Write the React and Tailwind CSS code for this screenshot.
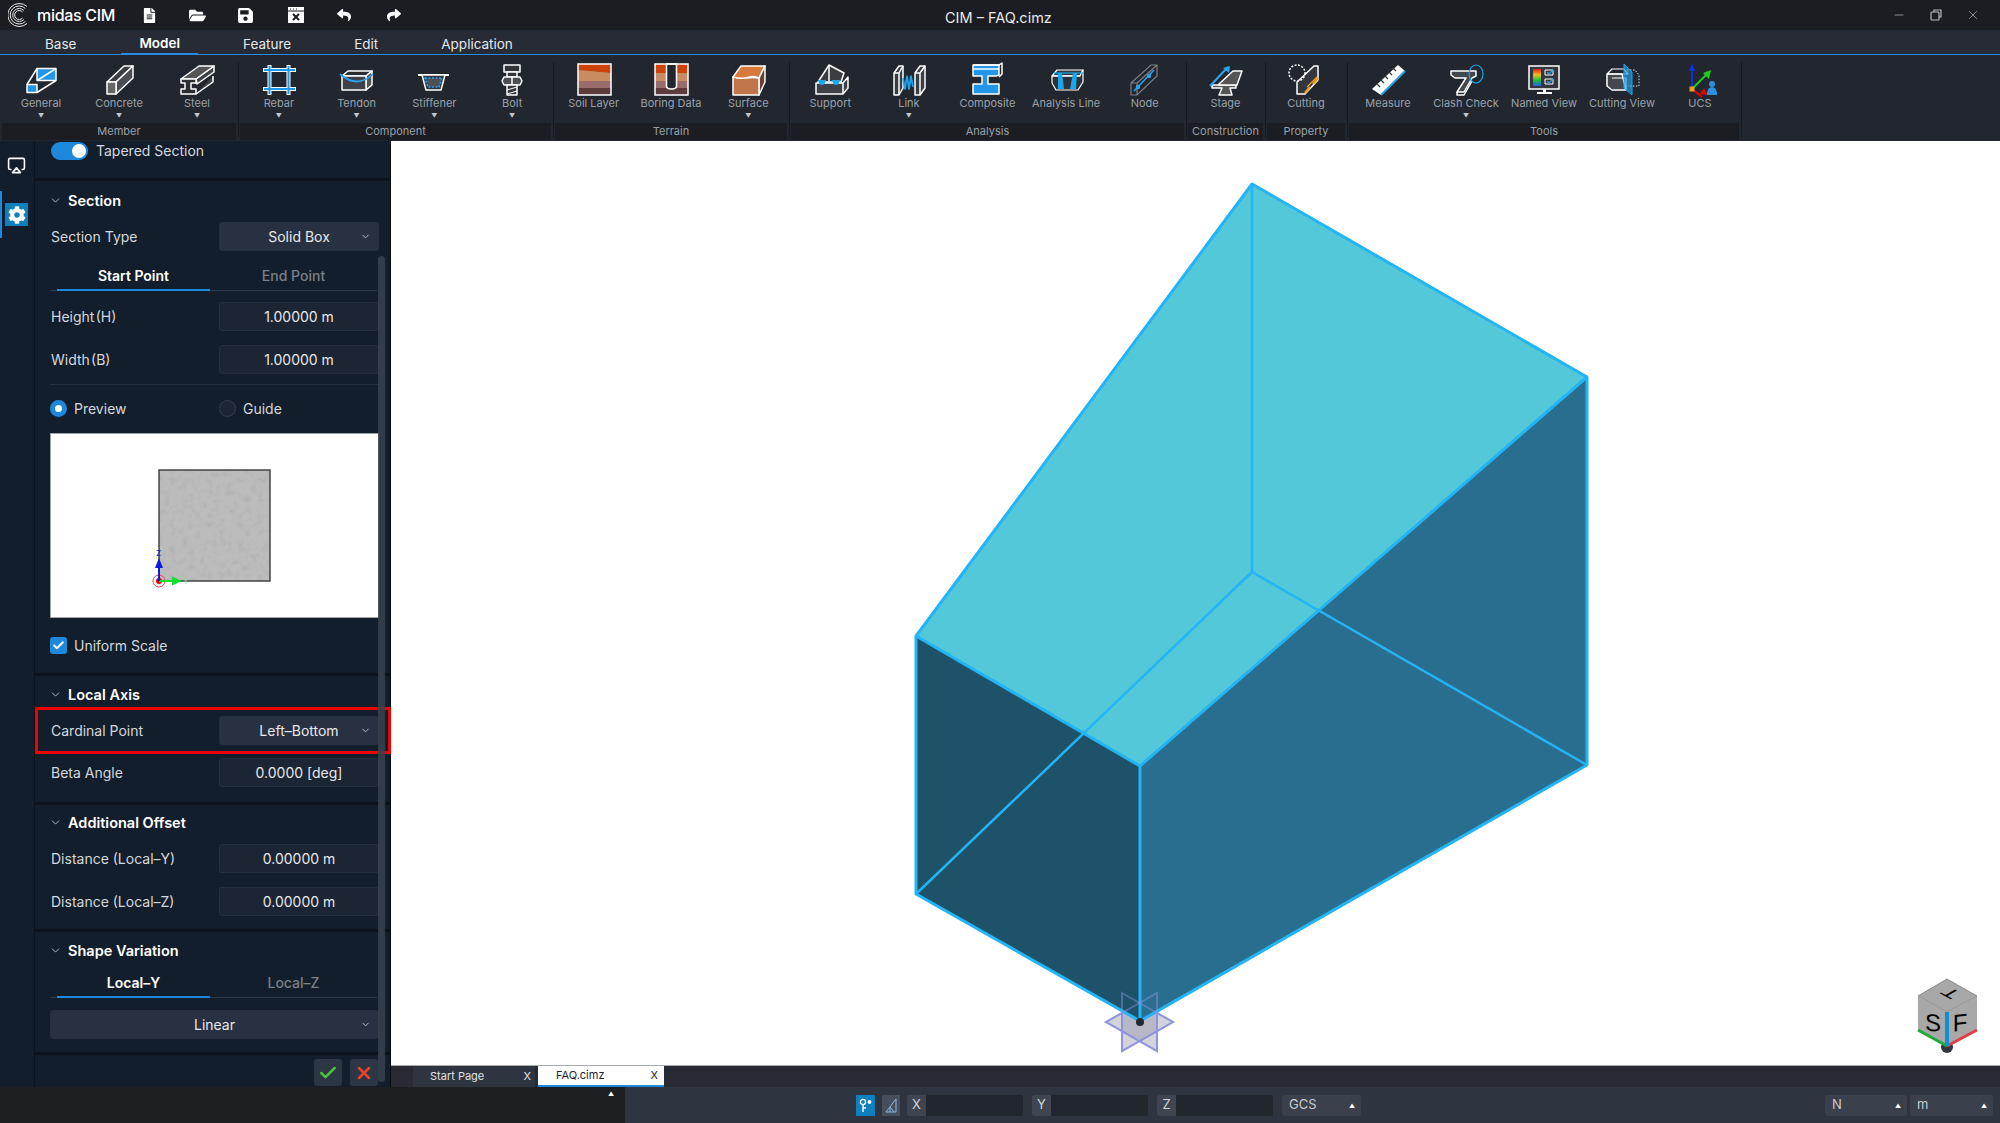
import React from "react";
import { Airplay, Check, ChevronDown, Minus, X } from "lucide-react";
import { FaCog, FaFileAlt, FaFolderOpen, FaReply, FaSave, FaShare } from "react-icons/fa";

// ribbon icons, drawn in a 40x30 box
const W = { fill: "none", stroke: "#fff", strokeWidth: 1.5, strokeLinejoin: "round" };
const ribbonIcons = {
  General: (
    <g {...W}>
      <rect x="16" y="3.5" width="19" height="12" fill="#2196e8" />
      <path d="M16 15.5 35 3.5" />
      <path d="M6 19.5 16 3.5M16 27.5 35 15.5" />
      <rect x="6" y="19.5" width="10" height="8" fill="#2196e8" />
    </g>
  ),
  Concrete: (
    <g {...W}>
      <path d="M8 17 25 1h9L17 17z" fill="#3a3d43" />
      <path d="M17 17 34 1v12L17 29z" fill="#4a4d52" />
      <rect x="8" y="17" width="9" height="12" fill="#666" />
    </g>
  ),
  Steel: (
    <g {...W}>
      <path d="M19 14 37 1v6l-17 12zM19 29l17-12v-6" fill="#3e4147" />
      <path d="M4 14 22 1h15L19 14z" fill="#555" />
      <path d="M4 14h15v4h-5v6h5v5H4v-5h4v-6H4z" fill="#2a2d33" />
    </g>
  ),
  Rebar: (
    <g fill="none">
      <path d="M10.5 0v30M29.5 0v30M4 5h33M4 24h33" stroke="#fff" strokeWidth="4" />
      <path d="M10.5 1v28M29.5 1v28M5 5h31M5 24h31" stroke="#2196e8" strokeWidth="2" />
    </g>
  ),
  Tendon: (
    <g {...W}>
      <path d="M5 11 11 6h24l-6 5z" fill="#2a2d33" />
      <path d="M29 11 35 6v14l-6 5z" fill="#555" />
      <rect x="5" y="11" width="24" height="14" fill="#3e4147" />
      <path d="M3 9q17 15 33 0" stroke="#2aa4ee" strokeWidth="1.7" />
    </g>
  ),
  Stiffener: (
    <g {...W}>
      <path d="M4 10h31" strokeWidth="2" />
      <path d="M8 10h23l-4 15H12z" fill="#2f3238" />
      <path d="M11 13h17l-3 9H14z" fill="#4d5056" stroke="#2aa4ee" strokeDasharray="2 1.5" />
    </g>
  ),
  Bolt: (
    <g {...W}>
      <rect x="12" y="0" width="16" height="7" fill="#33363c" />
      <rect x="15" y="7" width="10" height="5" fill="#33363c" />
      <path d="M12 12h16l2 4-2 4H12l-2-4z" fill="#4b4e54" />
      <path d="M20 12v8" />
      <rect x="15" y="20" width="10" height="10" fill="#33363c" />
      <path d="m15 25 10-3M15 29l10-3" strokeWidth="1" />
    </g>
  ),
  "Soil Layer": (
    <g>
      <rect x="4" y="-1" width="33" height="31" fill="#9a6d6c" />
      <path d="M4-1h33v9l-33-3z" fill="#cc4308" />
      <path d="M4 5l33 3v8H4z" fill="#c98b60" />
      <rect x="4" y="23" width="33" height="7" fill="#5d3c3c" />
      <rect x="4" y="-1" width="33" height="31" fill="none" stroke="#fff" strokeWidth="1.5" />
    </g>
  ),
  "Boring Data": (
    <g>
      <rect x="4" y="-1" width="33" height="31" fill="#9a6d6c" />
      <path d="M4-1h33v9H4z" fill="#cc4308" />
      <path d="M4 8h33v8H4z" fill="#c98b60" />
      <rect x="4" y="23" width="33" height="7" fill="#5d3c3c" />
      <path d="M15.5-1v22q0 3 5 3t5-3V-1z" fill="#22262e" stroke="#fff" strokeWidth="1.5" />
      <rect x="4" y="-1" width="33" height="31" fill="none" stroke="#fff" strokeWidth="1.5" />
    </g>
  ),
  Surface: (
    <g {...W}>
      <path d="M5 12 13 1h24l-6 12q-6-3-13 0t-13-1z" fill="#d97a3c" />
      <path d="M31 13 37 1v16l-6 13z" fill="#6b4030" />
      <path d="M5 12q6 2 13 1t13 0v17H5z" fill="#c0764a" />
    </g>
  ),
  Support: (
    <g {...W}>
      <path d="M8 17 19 0l15 8-3 9z" fill="#3a3d43" />
      <path d="M19 0v16" />
      <path d="M6 18h27v11H6zM33 18l5-6v11l-5 6" fill="#3e4147" />
      <path d="M8 15h8q-1 5-4 5t-4-5zM22 15h8q-1 5-4 5t-4-5z" fill="#19a6ee" stroke="none" />
    </g>
  ),
  Link: (
    <g {...W}>
      <path d="M5 8 10 1h4v22l-4 7H5z" fill="#3a3d43" />
      <path d="M10 8v22M5 8h5l4-7" />
      <path d="M26 8 31 1h5v22l-5 7h-5z" fill="#3a3d43" />
      <path d="M31 8v22M26 8h5l5-7" />
      <path d="m14 13 2 11 2-13 2 13 2-13 2 11" stroke="#19a6ee" strokeWidth="1.7" />
    </g>
  ),
  Composite: (
    <g {...W}>
      <path d="M6 0h26v10l-3 1H21v8h11v10H6V19h9v-8H6z" fill="#2196e8" />
      <path d="M6 0h26l3-2v11l-3 3" />
      <path d="M6 4h26" />
    </g>
  ),
  "Analysis Line": (
    <g {...W} strokeWidth="1.2">
      <path d="M6 11 11 5h26l-3 6z" fill="#33363c" />
      <path d="M34 11l3-6v12l-5 8H10l-4-7V11z" fill="#2e3137" />
      <path d="M6 11h28" />
      <path d="M12 8h4l2 16h-6zM27 8h4l-1 16h-6z" fill="#19a6ee" stroke="none" />
      <path d="M8 8h30" stroke="#19a6ee" />
    </g>
  ),
  Node: (
    <g fill="none" stroke="#7b7f86" strokeWidth="1.2">
      <path d="M6 18 26 0h6v11L12 30H6zM12 18 32 0M12 18H6M12 18v12" />
      <path d="M9 26 29 5" stroke="#2aa4ee" strokeWidth="1.6" />
      <circle cx="13" cy="22" r="2.2" fill="#2aa4ee" stroke="none" />
      <circle cx="24" cy="11" r="2.2" fill="#2aa4ee" stroke="none" />
    </g>
  ),
  Stage: (
    <g {...W}>
      <path d="M6 20h24v3h-6l2 7H13l3-7H6z" fill="#555" />
      <path d="m13 19 14-13h9l-5 14H13z" fill="#555" />
      <path d="M4 21 22 2" stroke="#2aa4ee" strokeWidth="2.2" />
      <path d="m17 3 7-2-1 7z" fill="#2aa4ee" stroke="none" />
    </g>
  ),
  Cutting: (
    <g {...W}>
      <path d="M11 17v12h8l13-14V1h-4z" fill="#33363c" />
      <circle cx="11" cy="8" r="8" stroke="#fff" strokeDasharray="2 1.5" />
      <path d="m19 28 5-6m3-3 5-6" stroke="#f0a020" strokeWidth="2.4" />
      <path d="M21 22 31 12" stroke="#f0a020" strokeWidth="1.2" />
    </g>
  ),
  Measure: (
    <g>
      <path d="M4 24 30 0l7 6-24 24z" fill="#fff" />
      <path d="m13 30 24-24" stroke="#2aa4ee" strokeWidth="2" />
      <path d="m9 19 3 3m1-7 3 3m1-7 3 3m1-7 3 3m1-7 3 3" stroke="#33363c" strokeWidth="1.2" />
    </g>
  ),
  "Clash Check": (
    <g {...W}>
      <path d="M5 6h25v5l-4 2-8 14H11l9-14H9l-4-3z" fill="#44474d" />
      <path d="M11 27v3h7l8-14" />
      <ellipse cx="30" cy="9" rx="7" ry="9" stroke="#19a6ee" strokeWidth="1.2" />
    </g>
  ),
  "Named View": (
    <g>
      <rect x="5" y="1" width="30" height="23" fill="#33363c" stroke="#fff" strokeWidth="1.5" />
      <rect x="9" y="4" width="8" height="17" fill="url(#rainbow)" />
      <path d="M21 5h8v5h-8zM21 14h8v5h-8z" fill="none" stroke="#fff" strokeWidth="1" />
      <path d="m23 7 2 2 4-4m-6 11 2 2 4-4" fill="none" stroke="#2aa4ee" strokeWidth="1.2" />
      <path d="M19 24h3v3h-3zM13 27h15v2H13z" fill="#fff" />
    </g>
  ),
  "Cutting View": (
    <g fill="none" strokeLinejoin="round">
      <path d="M5 9h15l4 16H10l-5-4z" fill="#44474d" stroke="#fff" strokeWidth="1.5" />
      <path d="M5 9 10 4h12l4 5H5M10 13h14v12" stroke="#fff" strokeWidth="1.2" />
      <path d="M25 5h8l4 5v11H26" stroke="#ddd" strokeWidth="1" strokeDasharray="1.5 1.5" />
      <path d="M22-1 30 7v23l-8-7z" fill="#2aa4ee" fillOpacity="0.65" stroke="#19a6ee" strokeWidth="1" />
    </g>
  ),
  UCS: (
    <g fill="none" strokeWidth="2">
      <path d="M12 24V4" stroke="#1030e0" />
      <path d="m12-2 3 8H9z" fill="#1030e0" />
      <path d="M12 24 26 10" stroke="#18d018" />
      <path d="m31 5-2 9-6-6z" fill="#18d018" />
      <path d="m12 24 12 4" stroke="#e00000" strokeWidth="2" transform="rotate(20 12 24)" />
      <path d="m28 30-8-1 4-6z" fill="#e00000" />
      <rect x="9.5" y="21.5" width="5" height="5" fill="#f0a020" />
      <circle cx="32" cy="19" r="3" fill="#2a90e0" />
      <path d="M27 30q0-8 5-8t5 8z" fill="#2a90e0" />
    </g>
  ),
};

const ribbonGroups = [
  { name: "Member", width: "w-[234px]", items: ["General", "Concrete", "Steel"], arrows: ["General", "Concrete", "Steel"] },
  { name: "Component", width: "w-[311px]", items: ["Rebar", "Tendon", "Stiffener", "Bolt"], arrows: ["Rebar", "Tendon", "Stiffener", "Bolt"] },
  { name: "Terrain", width: "w-[232px]", items: ["Soil Layer", "Boring Data", "Surface"], arrows: ["Surface"] },
  { name: "Analysis", width: "w-[393px]", items: ["Support", "Link", "Composite", "Analysis Line", "Node"], arrows: ["Link"] },
  { name: "Construction", width: "w-[75px]", items: ["Stage"], arrows: [] },
  { name: "Property", width: "w-[78px]", items: ["Cutting"], arrows: [] },
  { name: "Tools", width: "w-[390px]", items: ["Measure", "Clash Check", "Named View", "Cutting View", "UCS"], arrows: ["Clash Check"] },
];

function RibbonGroup({ group }) {
  return (
    <div className={`${group.width} flex flex-col`}>
      <div className="flex h-[68px]">
        {group.items.map((item) => (
          <div key={item} className="flex flex-1 flex-col items-center pt-[10px]">
            <svg width="40" height="30" viewBox="0 0 40 30" className="overflow-visible">
              {ribbonIcons[item]}
            </svg>
            <span className="h-[16px] whitespace-nowrap text-[11px] leading-[16px] text-[#98a1ab]">{item}</span>
            {group.arrows.includes(item) && <span className="mt-[1px] text-[6px] leading-[8px] text-[#c4c8cd]">▼</span>}
          </div>
        ))}
      </div>
      <div className="flex h-[17px] items-center justify-center bg-[#1b1d22] text-[11px] text-[#98a1ab]">{group.name}</div>
    </div>
  );
}

function TitleBar() {
  return (
    <div className="flex h-[30px] items-center bg-[#1b1d22] text-white">
      <svg width="24" height="26" viewBox="0 0 24 26" className="ml-[8px]" fill="none" stroke="#e8e8e8" strokeWidth="1">
        <path d="M19 4.500a11.500 11.500 0 1 0 0 17" />
        <path d="M17.400 6.500a9 9 0 1 0 0 13" />
        <path d="M15.900 8.500a6.500 6.500 0 1 0 0 9" />
        <path d="M14.550 10a4.500 4.500 0 1 0 0 6" />
      </svg>
      <span className="ml-[5px] w-[100px] text-[16px] font-medium tracking-[-0.3px]">midas CIM</span>
      <div className="flex w-[270px] items-center">
        <FaFileAlt className="ml-[5px] text-[15px]" />
        <FaFolderOpen className="ml-[32px] text-[17px]" />
        <FaSave className="ml-[31px] text-[17px]" />
        <svg width="18" height="18" viewBox="0 0 18 18" className="ml-[33px]">
          <path d="M1 1h16v16H1z" fill="#fff" />
          <path d="M1 5h16" stroke="#1b1d22" strokeWidth="1" />
          <path d="M3 3h1M6 3h1M9 3h1" stroke="#1b1d22" />
          <path d="m6 8 6 6m0-6-6 6" stroke="#1b1d22" strokeWidth="2" />
        </svg>
        <FaReply className="ml-[32px] text-[14px]" />
        <FaShare className="ml-[36px] text-[14px]" />
      </div>
      <span className="ml-[538px] pt-[5px] text-[14.5px] text-[#e8e8e8]">CIM – FAQ.cimz</span>
      <div className="ml-auto flex items-center gap-[23px] pr-[20px] text-[#b8bcc2]">
        <Minus size={14} strokeWidth={1.2} />
        <svg width="14" height="14" viewBox="0 0 14 14" fill="none" stroke="#b8bcc2" strokeWidth="1.2">
          <rect x="2" y="4" width="8" height="8" rx="1" />
          <path d="M5 4V2h7v7h-2" />
        </svg>
        <X size={14} strokeWidth={1.2} />
      </div>
    </div>
  );
}

function MenuTabs() {
  const tabs = ["Base", "Model", "Feature", "Edit", "Application"];
  return (
    <div className="flex h-[25px] gap-[27px] border-b border-[#2a8ae0] bg-[#262b35] pl-[27px] text-[13.5px] text-[#e6e8ea]">
      {tabs.map((tab) => (
        <div
          key={tab}
          className={
            tab === "Model"
              ? "-mb-px flex items-center border-b-[2px] border-[#2a8ae0] px-[18px] pt-[4px] font-semibold text-white"
              : "flex items-center px-[18px] pt-[4px]"
          }
        >
          {tab}
        </div>
      ))}
    </div>
  );
}

function Ribbon() {
  return (
    <div className="flex h-[86px] bg-[#22262e] pl-[2px]">
      {ribbonGroups.map((group, i) => (
        <React.Fragment key={group.name}>
          {i > 0 && <div className="mx-[1.5px] mt-[7px] mb-[3px] w-px bg-[#15181d]" />}
          <RibbonGroup group={group} />
        </React.Fragment>
      ))}
      <div className="mx-[1.5px] mt-[7px] mb-[3px] w-px bg-[#15181d]" />
    </div>
  );
}

function Field({ value, select, wide }) {
  return (
    <div
      className={`relative flex h-[29px] items-center justify-center rounded-[3px] border border-[#252f3e] text-[14px] text-[#e6e8ea] ${
        wide ? "w-[329px]" : "w-[160px]"
      } ${select ? "bg-[#283141]" : "bg-[#1c2533]"}`}
    >
      {value}
      {select && <ChevronDown size={11} strokeWidth={2} className="absolute right-[7px] text-[#c4c8cd]" />}
    </div>
  );
}

function Row({ label, value, select, className = "" }) {
  return (
    <div className={`flex items-center pl-[16px] ${className}`}>
      <span className="w-[168px] text-[14px] text-[#d4d8dc]">{label}</span>
      <Field value={value} select={select} />
    </div>
  );
}

function SectionHeader({ title, className }) {
  return (
    <div className={`flex items-center pl-[14px] ${className}`}>
      <ChevronDown size={13} strokeWidth={1.8} className="text-[#b4b9bf]" />
      <span className="ml-[6px] text-[14.5px] font-semibold text-white">{title}</span>
    </div>
  );
}

function SubTabs({ active, other, className }) {
  return (
    <div className={`ml-[15px] flex w-[327px] items-end border-b border-[#2d3848] text-[14px] ${className}`}>
      <div className="-mb-px ml-[7px] w-[153px] border-b-[2px] border-[#1e88dc] pb-[3px] text-center font-semibold text-white">
        {active}
      </div>
      <div className="flex-1 pb-[4px] text-center font-medium text-[#7a8087]">{other}</div>
    </div>
  );
}

function Preview() {
  return (
    <div className="ml-[15px] mt-[15px] h-[185px] w-[329px] border border-[#9ea3a8] bg-white">
      <svg width="327" height="183" viewBox="0 0 327 183">
        <defs>
          <filter id="concrete" x="0" y="0" width="100%" height="100%">
            <feTurbulence type="fractalNoise" baseFrequency="0.16" numOctaves="4" seed="4" />
            <feColorMatrix values="0 0 0 0 0.38 0 0 0 0 0.38 0 0 0 0 0.38 1.1 0 0 0 -0.5" />
            <feComposite in2="SourceGraphic" operator="in" />
            <feMerge>
              <feMergeNode in="SourceGraphic" />
              <feMergeNode />
            </feMerge>
          </filter>
        </defs>
        <rect x="108" y="36" width="111" height="111" fill="#bcbcbc" filter="url(#concrete)" />
        <rect x="108" y="36" width="111" height="111" fill="none" stroke="#3a3a3a" strokeWidth="1.4" />
        <circle cx="108" cy="147" r="6" fill="none" stroke="#e8404a" strokeWidth="1" />
        <circle cx="108" cy="147" r="3" fill="#e00000" />
        <path d="M108 147h16" stroke="#10e030" strokeWidth="2" />
        <path d="m131 147-10-4.500v9z" fill="#10e030" />
        <path d="M108 147v-16" stroke="#1018e0" strokeWidth="2" />
        <path d="m108 124-4 10h8z" fill="#1018e0" />
        <text x="132" y="150" fontSize="8" fill="#80e080">Y</text>
        <text x="105" y="122" fontSize="8" fill="#1018e0">Z</text>
      </svg>
    </div>
  );
}

function SidePanel() {
  return (
    <div className="relative h-full w-[356px] border-r border-[#080c12] bg-[#131e2c]">
      <div className="flex h-[37px] pl-[16px] pt-[1px]">
        <div className="flex h-[18px] w-[37px] items-center justify-end rounded-full bg-[#1e88dc] pr-[2px]">
          <div className="h-[14px] w-[14px] rounded-full bg-white" />
        </div>
        <span className="ml-[8px] text-[14px] leading-[18px] text-[#d4d8dc]">Tapered Section</span>
      </div>

      {/* Section */}
      <div className="h-[495px] border-t-[3px] border-[#0c131d]">
        <SectionHeader title="Section" className="h-[41px] pb-[2px]" />
        <Row label="Section Type" value="Solid Box" select />
        <SubTabs active="Start Point" other="End Point" className="h-[40px]" />
        <Row label={"Height\u200a(H)"} value="1.00000 m" className="mt-[11px]" />
        <Row label={"Width\u200a(B)"} value="1.00000 m" className="mt-[14px]" />
        <div className="ml-[15px] mt-[10px] h-px w-[329px] bg-[#263040]" />
        <div className="mt-[13px] flex h-[20px] items-center pl-[15px] text-[14px] text-[#d4d8dc]">
          <div className="flex w-[169px] items-center">
            <div className="flex h-[17px] w-[17px] items-center justify-center rounded-full bg-[#1e88dc]">
              <div className="h-[7px] w-[7px] rounded-full bg-white" />
            </div>
            <span className="ml-[7px]">Preview</span>
          </div>
          <div className="h-[17px] w-[17px] rounded-full border border-[#34404f] bg-[#1c2533]" />
          <span className="ml-[7px]">Guide</span>
        </div>
        <Preview />
        <div className="mt-[17px] flex h-[20px] items-center pl-[15px] text-[14px] text-[#d4d8dc]">
          <div className="flex h-[17px] w-[17px] items-center justify-center rounded-[3px] bg-[#1e88dc]">
            <Check size={13} strokeWidth={3.5} className="text-white" />
          </div>
          <span className="ml-[7px]">Uniform Scale</span>
        </div>
      </div>

      {/* Local Axis */}
      <div className="h-[129px] border-t-[3px] border-[#0c131d]">
        <SectionHeader title="Local Axis" className="h-[36px] pt-[1px]" />
        <div className="relative mt-[4px]">
          <Row label="Cardinal Point" value="Left–Bottom" select />
          <div className="pointer-events-none absolute -top-[9px] left-0 h-[47px] w-[356px] border-[3px] border-[#f00000]" />
        </div>
        <Row label="Beta Angle" value="0.0000 [deg]" className="mt-[13px]" />
      </div>

      {/* Additional Offset */}
      <div className="h-[127px] border-t-[3px] border-[#0c131d]">
        <SectionHeader title="Additional Offset" className="h-[36px] pb-[1px]" />
        <Row label="Distance (Local–Y)" value="0.00000 m" className="mt-[3px]" />
        <Row label="Distance (Local–Z)" value="0.00000 m" className="mt-[14px]" />
      </div>

      {/* Shape Variation */}
      <div className="h-[123px] border-t-[3px] border-[#0c131d]">
        <SectionHeader title="Shape Variation" className="h-[38px] pb-[1px]" />
        <SubTabs active="Local–Y" other="Local–Z" className="h-[28px]" />
        <div className="ml-[15px] mt-[12px]">
          <Field value="Linear" select wide />
        </div>
      </div>

      {/* confirm buttons */}
      <div className="flex h-[35px] justify-end gap-[8px] border-t-[3px] border-[#0c131d] pr-[12px] pt-[4px]">
        <div className="flex h-[27px] w-[28px] items-center justify-center rounded-[3px] bg-[#2c3644]">
          <Check size={20} strokeWidth={3} className="text-[#4fc23c]" />
        </div>
        <div className="flex h-[27px] w-[28px] items-center justify-center rounded-[3px] bg-[#2c3644]">
          <X size={20} strokeWidth={3} className="text-[#e8432a]" />
        </div>
      </div>

      {/* scrollbar */}
      <div className="absolute right-[5px] top-[115px] h-[826px] w-[7px] rounded-full bg-[#3a4350]/85" />
    </div>
  );
}

function Viewport() {
  const star1 = "1122,994 1173,1023 1122,1052";
  const star2 = "1157,994 1106,1023 1157,1052";
  return (
    <div className="relative flex-1 bg-white">
      <svg className="absolute inset-0" width="1609" height="923" viewBox="391 142 1609 923">
        <polygon points={star1} fill="#8e90a6" fillOpacity="0.4" stroke="#8f95e0" strokeWidth="2" />
        <polygon points={star2} fill="#8e90a6" fillOpacity="0.4" stroke="#8f95e0" strokeWidth="2" />

        <polygon points="1252,185 1587,378 1140,767 916,637" fill="#52c8d9" />
        <polygon points="1587,378 1587,766 1140,1022 1140,767" fill="#2a6e8f" />
        <polygon points="916,637 1140,767 1140,1022 916,895" fill="#1d5269" />

        <g fill="none" stroke="#22b4f7" strokeWidth="2.5" strokeLinejoin="round">
          <polygon points="1252,185 1587,378 1587,766 1140,1022 916,895 916,637" strokeWidth="3" />
          <path d="M916 637 1140 767 1587 378" strokeWidth="3" />
          <path d="M1140 767V1022" strokeWidth="3" />
          <path d="M1252 185V573L916 895M1252 573 1587 766" />
        </g>

        <polygon points={star1} fill="none" stroke="#8f95e0" strokeOpacity="0.45" strokeWidth="2" />
        <polygon points={star2} fill="none" stroke="#8f95e0" strokeOpacity="0.45" strokeWidth="2" />
        <circle cx="1140" cy="1023" r="4" fill="#23262c" />

        {/* view cube */}
        <circle cx="1947" cy="1048" r="6" fill="#33363f" />
        <polygon points="1947,980 1977,997 1947,1013 1918,997" fill="#a8a8a8" stroke="#777" strokeWidth="0.8" />
        <polygon points="1918,997 1947,1013 1947,1047 1918,1031" fill="#a8a8a8" />
        <polygon points="1977,997 1947,1013 1947,1047 1977,1031" fill="#a8a8a8" />
        <path d="M1918 1031 1947 1047" stroke="#1eaa3c" strokeWidth="3" />
        <path d="M1977 1031 1947 1047" stroke="#e04040" strokeWidth="3" />
        <path d="M1947 1013V1047" stroke="#1090d0" strokeWidth="4" />
        <g fontFamily="'Liberation Sans',sans-serif" fontSize="24" fill="#000" fontWeight="500">
          <text textAnchor="middle" transform="translate(1933 1032) skewY(6)">S</text>
          <text textAnchor="middle" transform="translate(1960 1032) skewY(-6)">F</text>
          <text textAnchor="middle" fontSize="18" transform="matrix(1.1 .6 .87 -.5 1956 991)">T</text>
        </g>

        <defs>
          <linearGradient id="rainbow" x1="0" y1="0" x2="0" y2="1">
            <stop offset="0" stopColor="#e02020" />
            <stop offset="0.35" stopColor="#f0c020" />
            <stop offset="0.65" stopColor="#20c040" />
            <stop offset="1" stopColor="#2060e0" />
          </linearGradient>
        </defs>
      </svg>
    </div>
  );
}

function DocTabs() {
  return (
    <div className="flex h-[22px] border-t border-[#a8abb0] bg-[#282b33] pl-[22px] text-[11px]">
      <div className="flex w-[122px] items-center justify-between bg-[#2f3540] pl-[17px] pr-[4px] text-[#e0e2e5]">
        <span>Start Page</span>
        <span>X</span>
      </div>
      <div className="ml-[3px] flex w-[126px] items-center justify-between border-b-[2px] border-[#1e88dc] bg-white pl-[18px] pr-[6px] text-[#22262e]">
        <span>FAQ.cimz</span>
        <span>X</span>
      </div>
    </div>
  );
}

function CoordInput({ axis }) {
  return (
    <div className="flex h-[21px] w-[116px] overflow-hidden rounded-[2px] bg-[#22272e] text-[13px] text-[#d4d8dc]">
      <div className="flex w-[19px] items-center justify-center bg-[#3f4651]">{axis}</div>
    </div>
  );
}

function Dropdown({ label, width }) {
  return (
    <div className={`flex h-[21px] ${width} items-center justify-between rounded-[3px] bg-[#3a404c] pl-[7px] pr-[6px] text-[13px] text-[#c8ccd2]`}>
      <span>{label}</span>
      <span className="text-[6px] text-white">▲</span>
    </div>
  );
}

function StatusBar() {
  return (
    <div className="flex h-[36px]">
      <div className="flex w-[625px] justify-end bg-[#1e1f22] pr-[11px] pt-[3px]">
        <span className="text-[6px] leading-[8px] text-white">▲</span>
      </div>
      <div className="flex flex-1 items-center bg-[#2f3540] pl-[231px] pr-[7px]">
        <div className="flex h-[21px] w-[19px] items-center justify-center bg-[#0f7fbd]">
          <svg width="13" height="15" viewBox="0 0 13 15" fill="none" stroke="#fff" strokeWidth="1.4">
            <circle cx="4" cy="4" r="2.6" />
            <path d="M4 7v7M4 10h3" />
            <circle cx="10.500" cy="4" r="1.200" fill="#fff" />
          </svg>
        </div>
        <div className="ml-[7px] flex h-[21px] w-[18px] items-center justify-center bg-[#46505c]">
          <svg width="13" height="15" viewBox="0 0 13 15" fill="none" stroke="#8db4de" strokeWidth="1">
            <path d="M1 14 11 1v13zM5 14V9l4 5" />
          </svg>
        </div>
        <div className="ml-[7px]">
          <CoordInput axis="X" />
        </div>
        <div className="ml-[9px]">
          <CoordInput axis="Y" />
        </div>
        <div className="ml-[9px]">
          <CoordInput axis="Z" />
        </div>
        <div className="ml-[9px]">
          <Dropdown label="GCS" width="w-[79px]" />
        </div>
        <div className="ml-auto flex gap-[3px]">
          <Dropdown label="N" width="w-[82px]" />
          <Dropdown label="m" width="w-[83px]" />
        </div>
      </div>
    </div>
  );
}

export default function App() {
  return (
    <div className="flex h-[1123px] w-[2000px] flex-col overflow-hidden bg-[#1b1d22] font-['Inter',sans-serif]">
      <TitleBar />
      <MenuTabs />
      <Ribbon />
      <div className="flex h-[946px]">
        {/* icon rail */}
        <div className="w-[35px] border-r border-[#0c131d] bg-[#131e2c] pt-[15px]">
          <Airplay size={19} strokeWidth={2} className="ml-[7px] text-white" />
          <div className="mt-[16px] flex h-[47px] items-center border-l-[2px] border-[#1e88dc] pl-[3px]">
            <div className="flex h-[23px] w-[23px] items-center justify-center bg-[#0f7fbd]">
              <FaCog className="text-[18px] text-white" />
            </div>
          </div>
        </div>
        <SidePanel />
        <div className="flex flex-1 flex-col">
          <Viewport />
          <DocTabs />
        </div>
      </div>
      <StatusBar />
    </div>
  );
}
